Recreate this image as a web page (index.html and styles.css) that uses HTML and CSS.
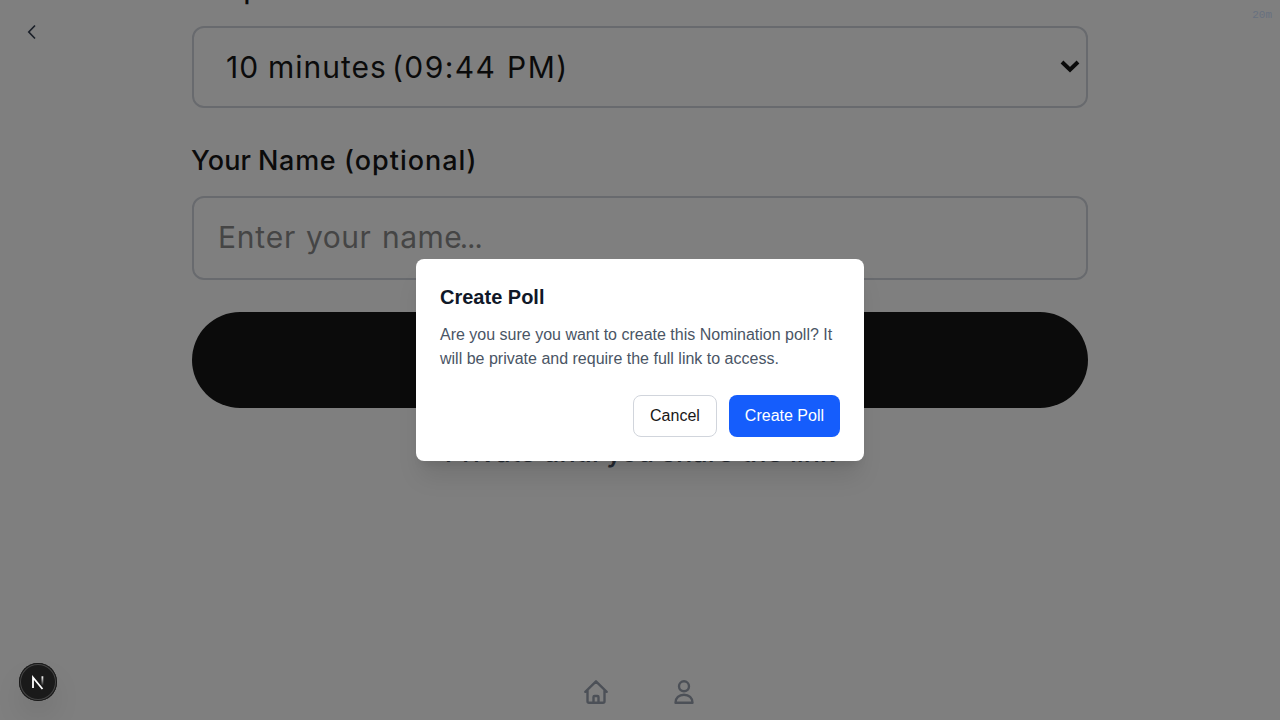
FILE: index.html
```html
<!DOCTYPE html>
<html lang="en">
<head>
<meta charset="utf-8">
<title>Create Poll</title>
<link rel="stylesheet" href="styles.css">
</head>
<body>
<main class="page">
  <div class="label label-top"><span>Response</span></div>
  <div class="field select"><span class="w1">10</span><span class="w2">minutes</span><span class="w3">(09:44</span><span class="w4">PM)</span>
    <svg class="chevron" width="20" height="14" viewBox="0 0 20 14"><path d="M2 3 10 10.700 18 3" fill="none" stroke="#171717" stroke-width="4"/></svg>
  </div>
  <div class="label label-name"><span class="n1">Your</span><span class="n2">Name</span><span class="n3">(optional)</span></div>
  <div class="field input"><span class="p1">Enter</span><span class="p2">your</span><span class="p3">name<span class="dots">…</span></span></div>
  <div class="submit"></div>
  <p class="note">Private until you share the link</p>
</main>
<svg class="back" width="24" height="24" viewBox="0 0 24 24"><path d="M15 5.500 8.800 12 15 18.500" fill="none" stroke="#364153" stroke-width="1.700"/></svg>
<div class="timer">20m</div>
<nav class="nav">
  <svg width="26" height="26" viewBox="0 0 26 26" fill="none" stroke="#99a1af" stroke-width="2.400" stroke-linecap="round" stroke-linejoin="round"><path d="M2.300 12.800 13 2.300 23.700 12.800M4.500 11V22.300Q4.500 23.800 6 23.800H20Q21.500 23.800 21.500 22.300V11M10.500 23.500V18Q10.500 17 11.500 17H14.500Q15.500 17 15.500 18V23.500"/></svg>
  <svg width="26" height="26" viewBox="0 0 26 26" fill="none" stroke="#99a1af" stroke-width="2.400" stroke-linejoin="round"><circle cx="13" cy="7.300" r="5"/><path d="M4.500 23.700C4.500 19 8 15.700 13 15.700S21.500 19 21.500 23.700Z"/></svg>
</nav>
<div class="overlay">
  <section class="dialog">
    <h2>Create Poll</h2>
    <p>Are you sure you want to create this Nomination poll? It will be private and require the full link to access.</p>
    <div class="actions"><button class="cancel">Cancel</button><button class="create">Create Poll</button></div>
  </section>
</div>
<div class="badge">
  <svg width="38" height="38" viewBox="0 0 38 38">
    <defs><linearGradient id="fade" x1="0" y1="0" x2="0" y2="1"><stop offset="0" stop-color="#fff"/><stop offset="1" stop-color="#fff" stop-opacity="0"/></linearGradient></defs>
    <path d="M14 25V14.500L23.500 26" fill="none" stroke="#fff" stroke-width="1.800"/><rect x="22.500" y="13.300" width="1.800" height="9.500" fill="url(#fade)"/>
  </svg>
</div>
</body>
</html>
```
FILE: styles.css
```css
* { box-sizing: border-box; }
body { margin: 0; width: 1280px; height: 720px; overflow: hidden; background: #fff; font-family: "Liberation Sans", Arial, sans-serif; }
.page { display: flex; flex-direction: column; width: 896px; margin: 0 auto; font-family: Inter, sans-serif; color: #171717; }
.page span { white-space: nowrap; }
.label { display: flex; font-size: 27px; font-weight: 500; line-height: 40px; }
.label-top { height: 26px; align-items: flex-end; }
.label-top span { margin-bottom: 16px; letter-spacing: 1.3px; }
.label-name { margin-top: 32px; height: 56px; padding-top: 1px; }
.field { display: flex; align-items: center; border: 2px solid #d1d5dc; border-radius: 12px; font-size: 30px; line-height: 40px; }
.select { height: 82px; padding-left: 32px; position: relative; }
.input { height: 84px; padding: 19px 0 2px 24px; align-items: baseline; color: #8b8b8b; }
.w1 { width: 42px; letter-spacing: 1px; }
.w2 { width: 124px; letter-spacing: 1px; }
.w3 { width: 115px; letter-spacing: 1.4px; }
.w4 { letter-spacing: 1.5px; }
.n1 { width: 67px; margin-left: -1px; letter-spacing: .2px; }
.n2 { width: 86px; letter-spacing: .7px; }
.n3 { letter-spacing: 1px; }
.p1 { width: 88px; letter-spacing: .8px; }
.p2 { width: 76px; letter-spacing: .5px; }
.p3 { letter-spacing: .5px; }
.dots { font-size: 22px; font-weight: 700; line-height: 1; letter-spacing: 0; margin-left: -2px; }
.chevron { position: absolute; right: 6px; top: 31px; }
.submit { height: 96px; margin-top: 32px; border-radius: 48px; background: #171717; }
.note { margin: 25px 0 0; text-align: center; font-size: 27px; font-weight: 500; line-height: 40px; letter-spacing: .1px; color: #4a5565; }
.back { position: absolute; left: 20px; top: 20px; }
.timer { position: absolute; right: 8px; top: 8px; font: 11px/14px "Liberation Mono", monospace; color: #cfe2ff; }
.nav { position: absolute; left: 0; right: 0; bottom: 15px; display: flex; justify-content: center; gap: 62px; }
.overlay { position: absolute; inset: 0; display: flex; align-items: center; justify-content: center; background: rgba(0, 0, 0, .5); }
.dialog { width: 448px; height: 202px; padding: 24px; border-radius: 8px; background: #fff; box-shadow: 0 20px 25px -5px rgba(0, 0, 0, .1), 0 8px 10px -6px rgba(0, 0, 0, .1); }
.dialog h2 { margin: 0 0 12px; font-size: 20px; line-height: 28px; font-weight: 700; color: #101828; }
.dialog p { margin: 0 0 24px; font-size: 16px; line-height: 24px; color: #4a5565; }
.actions { display: flex; justify-content: flex-end; gap: 12px; }
button { height: 42px; padding: 0 16px; border: 1px solid #d1d5dc; border-radius: 8px; background: #fff; color: #171717; font: 16px/24px "Liberation Sans", Arial, sans-serif; }
.create { border: 0; background: #155dfc; color: #fff; }
.badge { position: absolute; left: 19px; top: 663px; width: 38px; height: 38px; border-radius: 50%; background: #1a1a1a; box-shadow: inset 0 0 0 1px #171717, inset 0 0 0 2px #454545, 0 16px 32px -8px rgba(0, 0, 0, .24); }
```
